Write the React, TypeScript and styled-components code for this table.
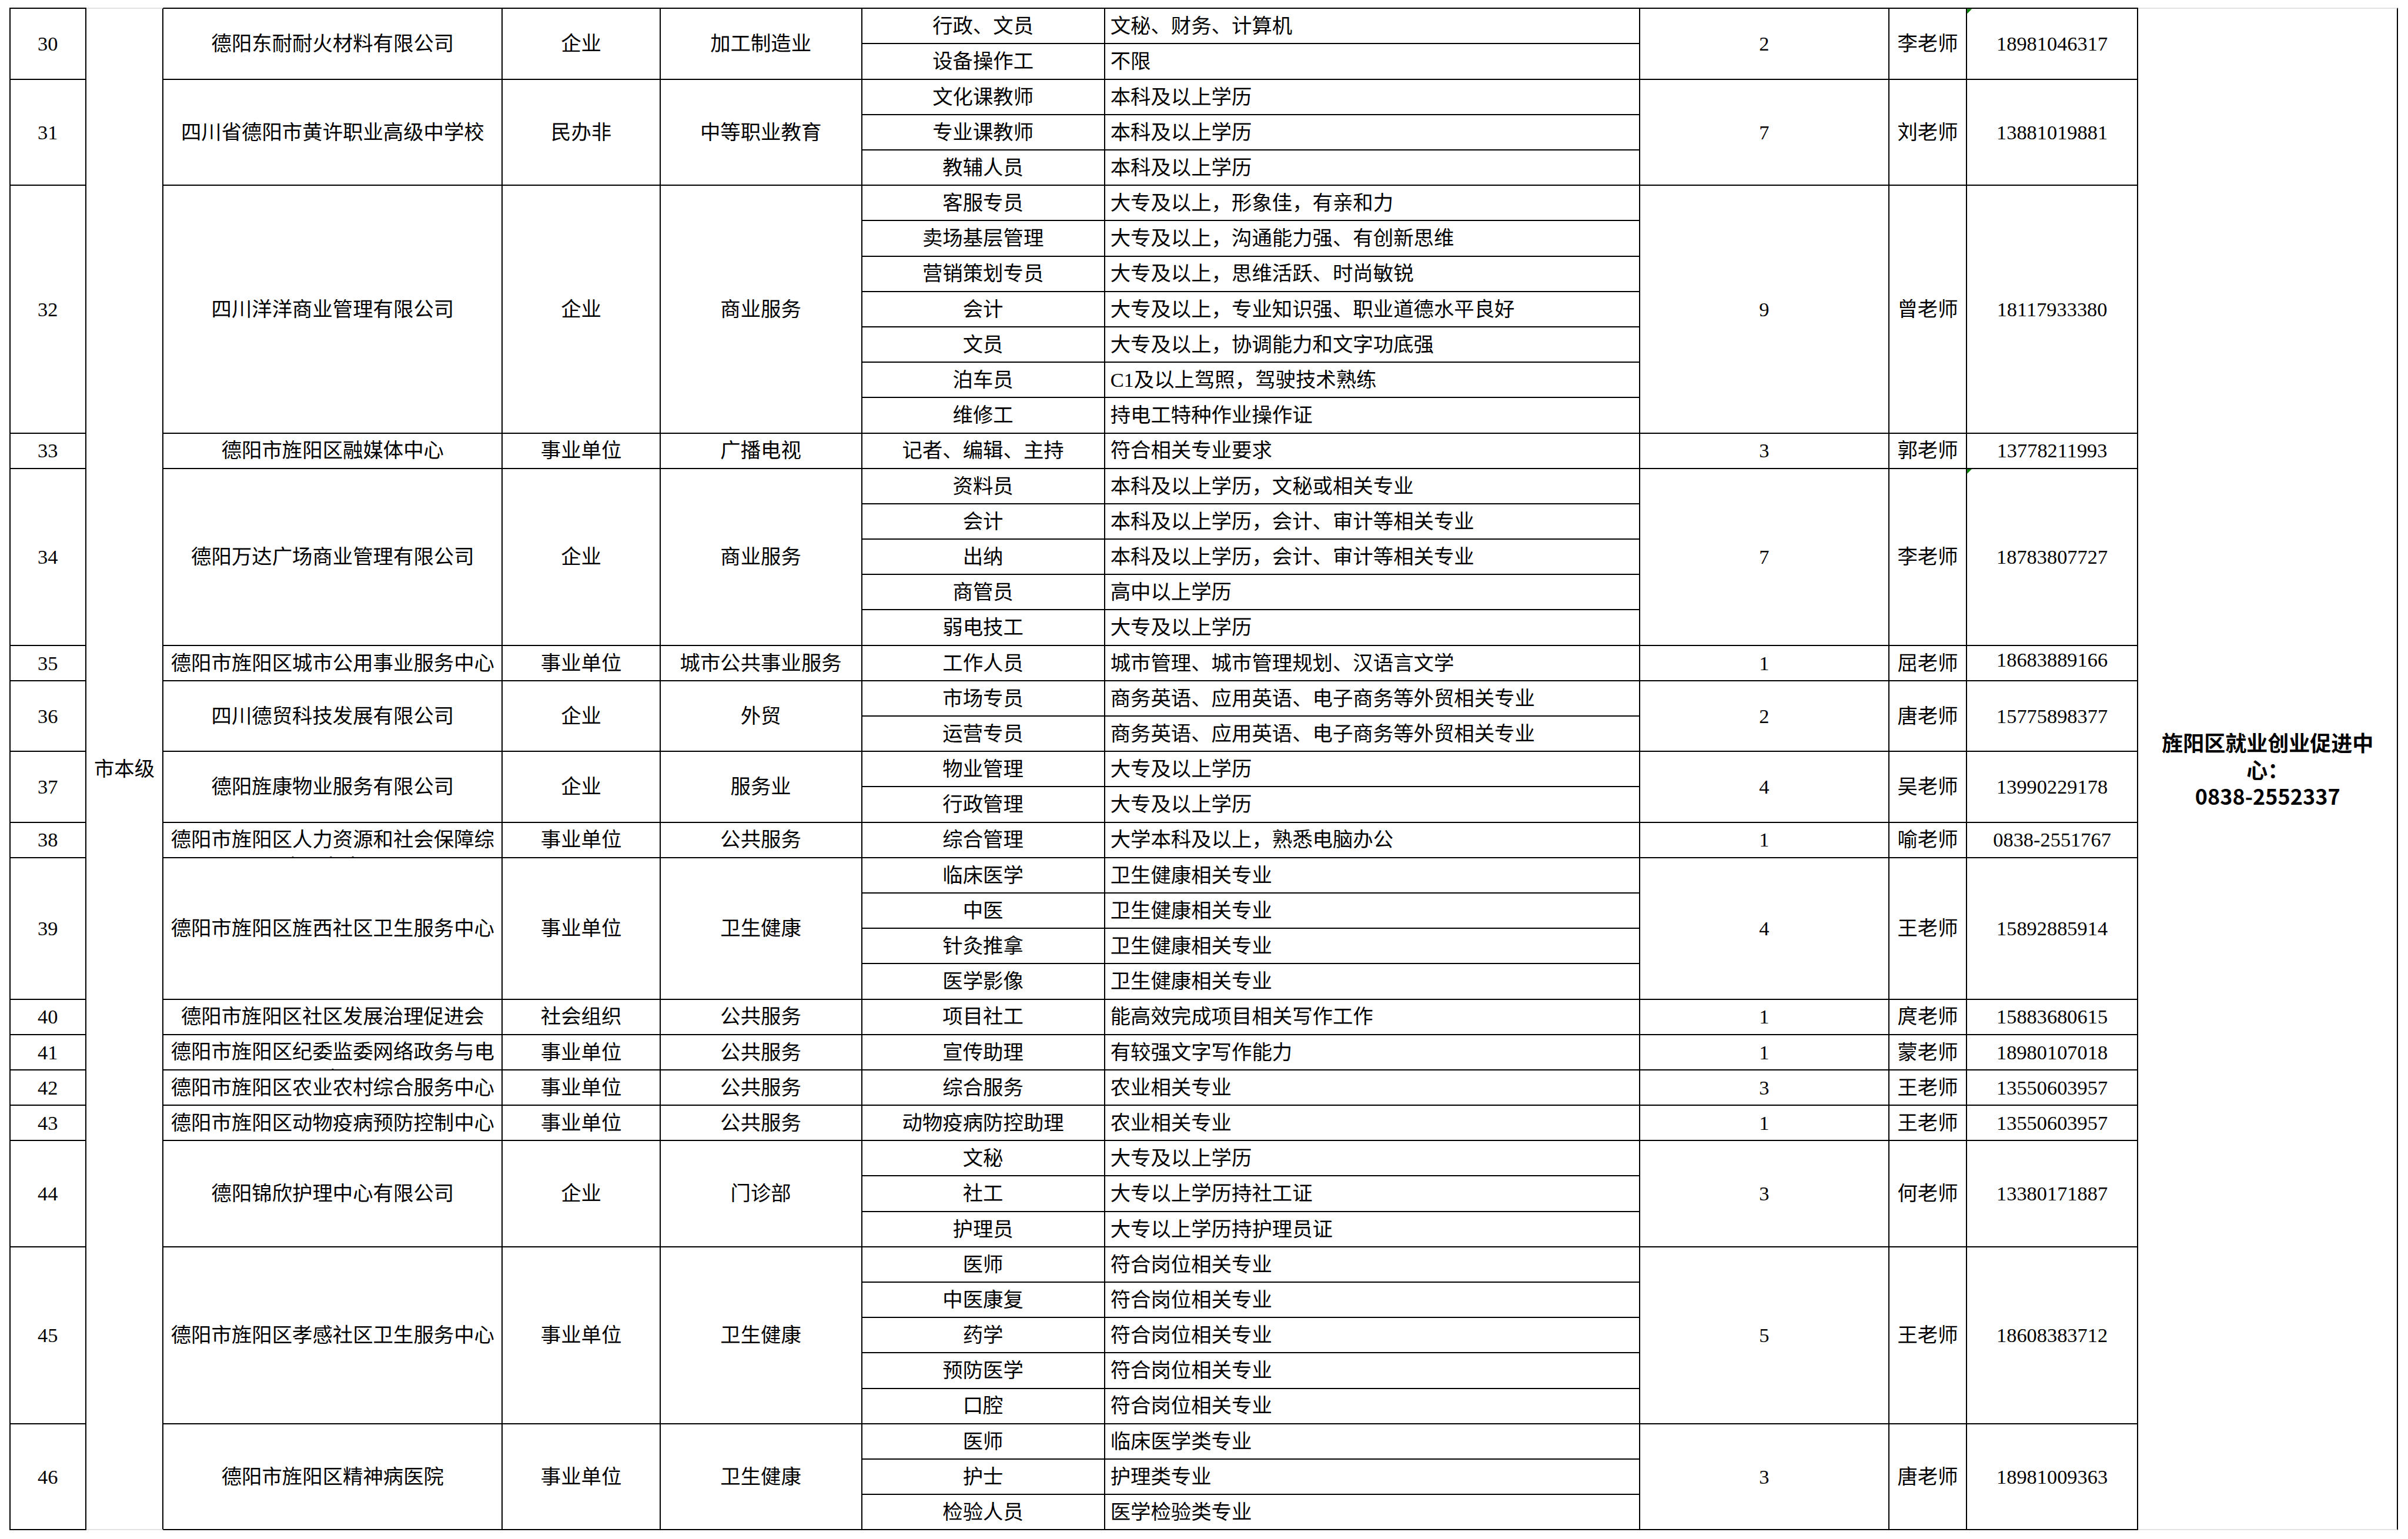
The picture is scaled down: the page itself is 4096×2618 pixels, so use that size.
import { Fragment } from 'react';
import styled, { createGlobalStyle } from 'styled-components';

const GlobalStyle = createGlobalStyle`
  html, body {
    margin: 0;
    padding: 0;
    background: #ffffff;
  }
  body {
    font-family: "Liberation Serif", "Noto Sans CJK SC", serif;
    color: #000;
  }
`;

const Sheet = styled.div`
  display: grid;
  grid-template-columns: 131.4px 131.3px 577.3px 268.2px 342.9px 413.1px 910.3px 424px 132.2px 290.9px 442.4px;
  grid-template-rows: 62.19px repeat(42, 60.19px);
  width: max-content;
  margin: 13.3px 0 0 15.5px;
  font-size: 34.4px;
  line-height: 1.35;
`;

const Cell = styled.div<{ $span?: number; $top?: boolean; $clip?: boolean }>`
  grid-row: span ${(p) => p.$span ?? 1};
  position: relative;
  box-sizing: border-box;
  display: flex;
  align-items: ${(p) => (p.$clip ? 'flex-start' : 'center')};
  justify-content: center;
  min-width: 0;
  padding: ${(p) => (p.$clip ? '5px 4px 0' : '0 4px')};
  text-align: center;
  line-height: ${(p) => (p.$clip ? '46px' : 'inherit')};
  overflow: hidden;
  border-right: 2px solid #000;
  border-bottom: 2px solid #000;
  border-top: ${(p) => (p.$top ? '2px solid #000' : 'none')};
`;

const IndexCell = styled(Cell)`
  border-left: 2px solid #000;
`;

const SoftCell = styled(Cell)`
  border-top: 2px solid #e2e2e2;
  border-bottom: 2px solid #e2e2e2;
`;

const CompanyCell = styled(Cell)``;

const JobCell = styled(Cell)``;

const RequireCell = styled(Cell)`
  justify-content: flex-start;
  text-align: left;
  padding-left: 9px;
`;

const PhoneCell = styled(Cell)<{ $flag?: boolean }>`
  padding-top: 0;
  &::before {
    content: '';
    display: ${(p) => (p.$flag ? 'block' : 'none')};
    position: absolute;
    top: 0;
    left: 0;
    width: 8px;
    height: 8px;
    background: #008000;
    clip-path: polygon(0 0, 100% 0, 0 100%);
  }
`;

const OfficeText = styled.div`
  font-family: "Noto Sans CJK SC", sans-serif;
  font-weight: 700;
  font-size: 36px;
  line-height: 45.6px;
  text-align: center;
`;

type Job = [string, string];

interface Org {
  no: number;
  name: string;
  kind: string;
  trade: string;
  jobs: Job[];
  count: number;
  contact: string;
  phone: string;
  extraPhone?: string;
  clipName?: boolean;
  flag?: boolean;
}

const health = '卫生健康相关专业';
const post = '符合岗位相关专业';

const orgs: Org[] = [
  { no: 30, name: '德阳东耐耐火材料有限公司', kind: '企业', trade: '加工制造业', jobs: [['行政、文员', '文秘、财务、计算机'], ['设备操作工', '不限']], count: 2, contact: '李老师', phone: '18981046317', flag: true },
  { no: 31, name: '四川省德阳市黄许职业高级中学校', kind: '民办非', trade: '中等职业教育', jobs: [['文化课教师', '本科及以上学历'], ['专业课教师', '本科及以上学历'], ['教辅人员', '本科及以上学历']], count: 7, contact: '刘老师', phone: '13881019881' },
  {
    no: 32, name: '四川洋洋商业管理有限公司', kind: '企业', trade: '商业服务',
    jobs: [
      ['客服专员', '大专及以上，形象佳，有亲和力'],
      ['卖场基层管理', '大专及以上，沟通能力强、有创新思维'],
      ['营销策划专员', '大专及以上，思维活跃、时尚敏锐'],
      ['会计', '大专及以上，专业知识强、职业道德水平良好'],
      ['文员', '大专及以上，协调能力和文字功底强'],
      ['泊车员', 'C1及以上驾照，驾驶技术熟练'],
      ['维修工', '持电工特种作业操作证'],
    ],
    count: 9, contact: '曾老师', phone: '18117933380',
  },
  { no: 33, name: '德阳市旌阳区融媒体中心', kind: '事业单位', trade: '广播电视', jobs: [['记者、编辑、主持', '符合相关专业要求']], count: 3, contact: '郭老师', phone: '13778211993' },
  {
    no: 34, name: '德阳万达广场商业管理有限公司', kind: '企业', trade: '商业服务',
    jobs: [
      ['资料员', '本科及以上学历，文秘或相关专业'],
      ['会计', '本科及以上学历，会计、审计等相关专业'],
      ['出纳', '本科及以上学历，会计、审计等相关专业'],
      ['商管员', '高中以上学历'],
      ['弱电技工', '大专及以上学历'],
    ],
    count: 7, contact: '李老师', phone: '18783807727', flag: true,
  },
  { no: 35, name: '德阳市旌阳区城市公用事业服务中心', kind: '事业单位', trade: '城市公共事业服务', jobs: [['工作人员', '城市管理、城市管理规划、汉语言文学']], count: 1, contact: '屈老师', phone: '18683889166', extraPhone: '13508101163' },
  { no: 36, name: '四川德贸科技发展有限公司', kind: '企业', trade: '外贸', jobs: [['市场专员', '商务英语、应用英语、电子商务等外贸相关专业'], ['运营专员', '商务英语、应用英语、电子商务等外贸相关专业']], count: 2, contact: '唐老师', phone: '15775898377' },
  { no: 37, name: '德阳旌康物业服务有限公司', kind: '企业', trade: '服务业', jobs: [['物业管理', '大专及以上学历'], ['行政管理', '大专及以上学历']], count: 4, contact: '吴老师', phone: '13990229178' },
  { no: 38, name: '德阳市旌阳区人力资源和社会保障综合服务中心', kind: '事业单位', trade: '公共服务', jobs: [['综合管理', '大学本科及以上，熟悉电脑办公']], count: 1, contact: '喻老师', phone: '0838-2551767', clipName: true },
  { no: 39, name: '德阳市旌阳区旌西社区卫生服务中心', kind: '事业单位', trade: '卫生健康', jobs: [['临床医学', health], ['中医', health], ['针灸推拿', health], ['医学影像', health]], count: 4, contact: '王老师', phone: '15892885914' },
  { no: 40, name: '德阳市旌阳区社区发展治理促进会', kind: '社会组织', trade: '公共服务', jobs: [['项目社工', '能高效完成项目相关写作工作']], count: 1, contact: '庹老师', phone: '15883680615' },
  { no: 41, name: '德阳市旌阳区纪委监委网络政务与电子中心', kind: '事业单位', trade: '公共服务', jobs: [['宣传助理', '有较强文字写作能力']], count: 1, contact: '蒙老师', phone: '18980107018', clipName: true },
  { no: 42, name: '德阳市旌阳区农业农村综合服务中心', kind: '事业单位', trade: '公共服务', jobs: [['综合服务', '农业相关专业']], count: 3, contact: '王老师', phone: '13550603957' },
  { no: 43, name: '德阳市旌阳区动物疫病预防控制中心', kind: '事业单位', trade: '公共服务', jobs: [['动物疫病防控助理', '农业相关专业']], count: 1, contact: '王老师', phone: '13550603957' },
  { no: 44, name: '德阳锦欣护理中心有限公司', kind: '企业', trade: '门诊部', jobs: [['文秘', '大专及以上学历'], ['社工', '大专以上学历持社工证'], ['护理员', '大专以上学历持护理员证']], count: 3, contact: '何老师', phone: '13380171887' },
  { no: 45, name: '德阳市旌阳区孝感社区卫生服务中心', kind: '事业单位', trade: '卫生健康', jobs: [['医师', post], ['中医康复', post], ['药学', post], ['预防医学', post], ['口腔', post]], count: 5, contact: '王老师', phone: '18608383712' },
  { no: 46, name: '德阳市旌阳区精神病医院', kind: '事业单位', trade: '卫生健康', jobs: [['医师', '临床医学类专业'], ['护士', '护理类专业'], ['检验人员', '医学检验类专业']], count: 3, contact: '唐老师', phone: '18981009363' },
];

const totalRows = orgs.reduce((sum, o) => sum + o.jobs.length, 0);

function App() {
  return (
    <>
      <GlobalStyle />
      <Sheet>
        {orgs.map((o, i) => {
          const span = o.jobs.length;
          const top = i === 0;
          return o.jobs.map(([job, need], j) => {
            const first = j === 0;
            return (
              <Fragment key={`${o.no}-${j}`}>
                {first && <IndexCell $span={span} $top={top}>{o.no}</IndexCell>}
                {first && top && <SoftCell $span={totalRows}>市本级</SoftCell>}
                {first && <CompanyCell $span={span} $top={top} $clip={o.clipName}>{o.name}</CompanyCell>}
                {first && <Cell $span={span} $top={top}>{o.kind}</Cell>}
                {first && <Cell $span={span} $top={top}>{o.trade}</Cell>}
                <JobCell $top={top && first}>{job}</JobCell>
                <RequireCell $top={top && first}>{need}</RequireCell>
                {first && <Cell $span={span} $top={top}>{o.count}</Cell>}
                {first && <Cell $span={span} $top={top}>{o.contact}</Cell>}
                {first && (
                  <PhoneCell $span={span} $top={top} $flag={o.flag} $clip={!!o.extraPhone}>
                    {o.phone}
                    {o.extraPhone && <br />}
                    {o.extraPhone}
                  </PhoneCell>
                )}
                {first && top && (
                  <SoftCell $span={totalRows}>
                    <OfficeText>
                      旌阳区就业创业促进中
                      <br />
                      心：
                      <br />
                      0838-2552337
                    </OfficeText>
                  </SoftCell>
                )}
              </Fragment>
            );
          });
        })}
      </Sheet>
    </>
  );
}

export default App;
